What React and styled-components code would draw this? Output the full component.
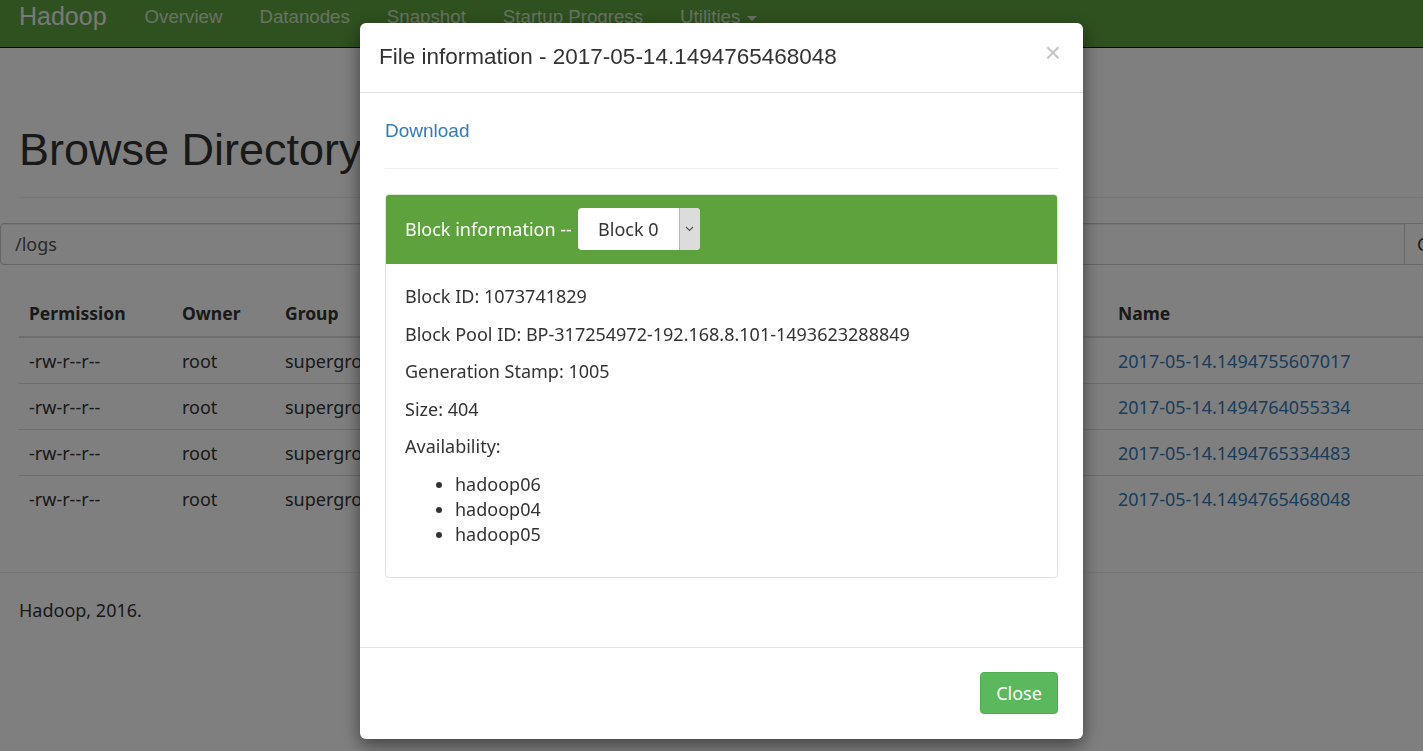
import React from 'react'
import styled, { createGlobalStyle } from 'styled-components'

const GlobalStyle = createGlobalStyle`
  html, body {
    margin: 0;
    padding: 0;
    background: #fff;
    color: #333;
    font-family: 'Noto Sans', 'Liberation Sans', sans-serif;
    font-size: 18px;
    overflow: hidden;
  }
  * { box-sizing: border-box; }
`

const Navbar = styled.nav`
  height: 48px;
  background: #5ea23e;
  border-bottom: 1px solid #0a0a0a;
  display: flex;
  align-items: flex-start;
  padding: 3px 0 0 19px;
  font-family: 'Liberation Sans', Arial, sans-serif;
`

const Brand = styled.a`
  color: #f0f0f0;
  font-size: 25px;
  line-height: 27px;
  margin-right: 38px;
`

const NavLink = styled.a`
  color: #d2e4c8;
  font-size: 18.7px;
  line-height: 27px;
  margin-right: 37px;
  white-space: nowrap;
`

const Caret = styled.span`
  display: inline-block;
  margin-left: 7px;
  border-top: 5px solid #d2e4c8;
  border-left: 5px solid transparent;
  border-right: 5px solid transparent;
  vertical-align: middle;
`

const Main = styled.main`
  padding-top: 77px;
`

const Title = styled.h1`
  margin: 0 0 0 19px;
  font-family: 'Liberation Sans', Arial, sans-serif;
  font-weight: 400;
  font-size: 45px;
  line-height: 49px;
  color: #333;
`

const Rule = styled.hr`
  margin: ${(p) => p.top || 0}px 0 0 ${(p) => p.left || 0}px;
  border: 0;
  border-top: 1px solid #eee;
`

const InputGroup = styled.div`
  display: flex;
  margin-top: 25px;
  height: 42px;
`

const PathInput = styled.div`
  flex: 0 0 1405px;
  border: 1px solid #ccc;
  border-radius: 4px 0 0 4px;
  padding: 0 14px;
  display: flex;
  align-items: center;
  color: #555;
  box-shadow: inset 0 1px 1px rgba(0, 0, 0, 0.075);
`

const GoButton = styled.button`
  flex: 1;
  border: 1px solid #ccc;
  border-left: 0;
  background: #fff;
  font-family: 'Noto Sans', sans-serif;
  font-size: 18px;
  color: #333;
  padding: 0 12px;
  text-align: left;
  white-space: nowrap;
  overflow: hidden;
`

const Table = styled.table`
  margin: 25px 0 0 19px;
  border-collapse: collapse;
  width: 1404px;
  table-layout: fixed;
`

const Th = styled.th`
  text-align: left;
  font-weight: 700;
  font-size: 17.5px;
  padding: 10px 10px;
  line-height: 26px;
  border-bottom: 2px solid #ddd;
  width: ${(p) => p.w}px;
  white-space: nowrap;
  overflow: hidden;
`

const Td = styled.td`
  padding: 9.5px 10px 9.5px;
  line-height: 26px;
  border-top: ${(p) => (p.first ? 0 : '1px solid #ddd')};
  white-space: nowrap;
  overflow: hidden;
`

const FileLink = styled.a`
  color: #337ab7;
  text-decoration: none;
`

const Footer = styled.footer`
  margin-top: 51px;
  border-top: 1px solid #eee;
  padding: 24px 19px;
  line-height: 26px;
`

const Backdrop = styled.div`
  position: fixed;
  inset: 0;
  background: rgba(0, 0, 0, 0.5);
`

const Modal = styled.div`
  position: absolute;
  top: 23px;
  left: 360px;
  width: 723px;
  height: 716px;
  background: #fff;
  border-radius: 6px;
  box-shadow: 0 6px 18px rgba(0, 0, 0, 0.5);
  display: flex;
  flex-direction: column;
`

const ModalHeader = styled.div`
  display: flex;
  align-items: center;
  justify-content: space-between;
  padding: 18px 22px 19px 19px;
  border-bottom: 1px solid #e5e5e5;
`

const ModalTitle = styled.h4`
  margin: 0;
  font-family: 'Liberation Sans', Arial, sans-serif;
  font-weight: 400;
  font-size: 22.5px;
  line-height: 32px;
  color: #333;
`

const CloseX = styled.button`
  border: 0;
  background: none;
  padding: 0;
  color: #c4c4c4;
  font-family: 'Liberation Sans', Arial, sans-serif;
  font-size: 28px;
  line-height: 20px;
  margin-top: -8px;
`

const ModalBody = styled.div`
  flex: 1;
  padding: 25px 25px 0 25px;
`

const Download = styled.a`
  display: block;
  color: #337ab7;
  font-family: 'Liberation Sans', Arial, sans-serif;
  font-size: 19px;
  line-height: 25px;
  text-decoration: none;
`

const Divider = styled.hr`
  margin: 25px 0 25px;
  border: 0;
  border-top: 1px solid #eee;
`

const Panel = styled.div`
  border: 1px solid #dbe6cf;
  border-radius: 4px;
  overflow: hidden;
`

const PanelHeading = styled.div`
  background: #5ea23e;
  color: #fff;
  height: 69px;
  padding: 0 19px 2px;
  display: flex;
  align-items: center;
  gap: 6px;
`

const Select = styled.div`
  display: flex;
  height: 42px;
  width: 122px;
  background: #fff;
  border-radius: 4px;
  overflow: hidden;
  color: #333;
`

const SelectValue = styled.span`
  flex: 1;
  display: flex;
  align-items: center;
  justify-content: center;
`

const SelectArrow = styled.span`
  width: 21px;
  background: #dcdcdc;
  border-left: 1px solid #b9b9b9;
  display: flex;
  align-items: center;
  justify-content: center;
`

const PanelBody = styled.div`
  padding: 20px 19px 30px;
`

const Line = styled.p`
  margin: 0 0 13.5px;
  line-height: 24px;
`

const HostList = styled.ul`
  margin: 0;
  padding-left: 50px;
  line-height: 25px;
`

const ModalFooter = styled.div`
  display: flex;
  justify-content: flex-end;
  padding: 24px 25px 25px;
  border-top: 1px solid #e5e5e5;
`

const CloseButton = styled.button`
  background: #5cb85c;
  border: 1px solid #4cae4c;
  color: #fff;
  border-radius: 4px;
  width: 78px;
  height: 42px;
  font-family: 'Noto Sans', sans-serif;
  font-size: 18px;
`

const columns = [
  { name: 'Permission', w: 153 },
  { name: 'Owner', w: 103 },
  { name: 'Group', w: 150 },
  { name: 'Size', w: 110 },
  { name: 'Last Modified', w: 200 },
  { name: 'Replication', w: 150 },
  { name: 'Block Size', w: 223 },
  { name: 'Name', w: 315 },
]

const files = [
  { name: '2017-05-14.1494755607017', size: '404 B', time: '2017/5/14 下午7:33:28' },
  { name: '2017-05-14.1494764055334', size: '404 B', time: '2017/5/14 下午8:20:56' },
  { name: '2017-05-14.1494765334483', size: '404 B', time: '2017/5/14 下午8:35:35' },
  { name: '2017-05-14.1494765468048', size: '404 B', time: '2017/5/14 下午8:37:48' },
]

const block = {
  id: '1073741829',
  pool: 'BP-317254972-192.168.8.101-1493623288849',
  stamp: '1005',
  size: '404',
  hosts: ['hadoop06', 'hadoop04', 'hadoop05'],
}

export default function App() {
  return (
    <>
      <GlobalStyle />
      <Navbar>
        <Brand>Hadoop</Brand>
        <NavLink>Overview</NavLink>
        <NavLink>Datanodes</NavLink>
        <NavLink>Snapshot</NavLink>
        <NavLink>Startup Progress</NavLink>
        <NavLink>
          Utilities<Caret />
        </NavLink>
      </Navbar>

      <Main>
        <Title>Browse Directory</Title>
        <Rule top={23} left={19} />
        <InputGroup>
          <PathInput>/logs</PathInput>
          <GoButton>Go!</GoButton>
        </InputGroup>
        <Table>
          <thead>
            <tr>
              {columns.map((c) => (
                <Th key={c.name} w={c.w}>
                  {c.name}
                </Th>
              ))}
            </tr>
          </thead>
          <tbody>
            {files.map((f, i) => (
              <tr key={f.name}>
                <Td first={i === 0}>-rw-r--r--</Td>
                <Td first={i === 0}>root</Td>
                <Td first={i === 0}>supergroup</Td>
                <Td first={i === 0}>{f.size}</Td>
                <Td first={i === 0}>{f.time}</Td>
                <Td first={i === 0}>3</Td>
                <Td first={i === 0}>128 MB</Td>
                <Td first={i === 0}>
                  <FileLink href="#">{f.name}</FileLink>
                </Td>
              </tr>
            ))}
          </tbody>
        </Table>
        <Footer>Hadoop, 2016.</Footer>
      </Main>

      <Backdrop>
        <Modal>
          <ModalHeader>
            <ModalTitle>File information - 2017-05-14.1494765468048</ModalTitle>
            <CloseX>×</CloseX>
          </ModalHeader>
          <ModalBody>
            <Download href="#">Download</Download>
            <Divider />
            <Panel>
              <PanelHeading>
                Block information --
                <Select>
                  <SelectValue>Block 0</SelectValue>
                  <SelectArrow>
                    <svg width="9" height="6" viewBox="0 0 9 6">
                      <polyline points="1,1 4.5,4.5 8,1" fill="none" stroke="#555" strokeWidth="1.2" />
                    </svg>
                  </SelectArrow>
                </Select>
              </PanelHeading>
              <PanelBody>
                <Line>Block ID: {block.id}</Line>
                <Line>Block Pool ID: {block.pool}</Line>
                <Line>Generation Stamp: {block.stamp}</Line>
                <Line>Size: {block.size}</Line>
                <Line>Availability:</Line>
                <HostList>
                  {block.hosts.map((h) => (
                    <li key={h}>{h}</li>
                  ))}
                </HostList>
              </PanelBody>
            </Panel>
          </ModalBody>
          <ModalFooter>
            <CloseButton>Close</CloseButton>
          </ModalFooter>
        </Modal>
      </Backdrop>
    </>
  )
}
